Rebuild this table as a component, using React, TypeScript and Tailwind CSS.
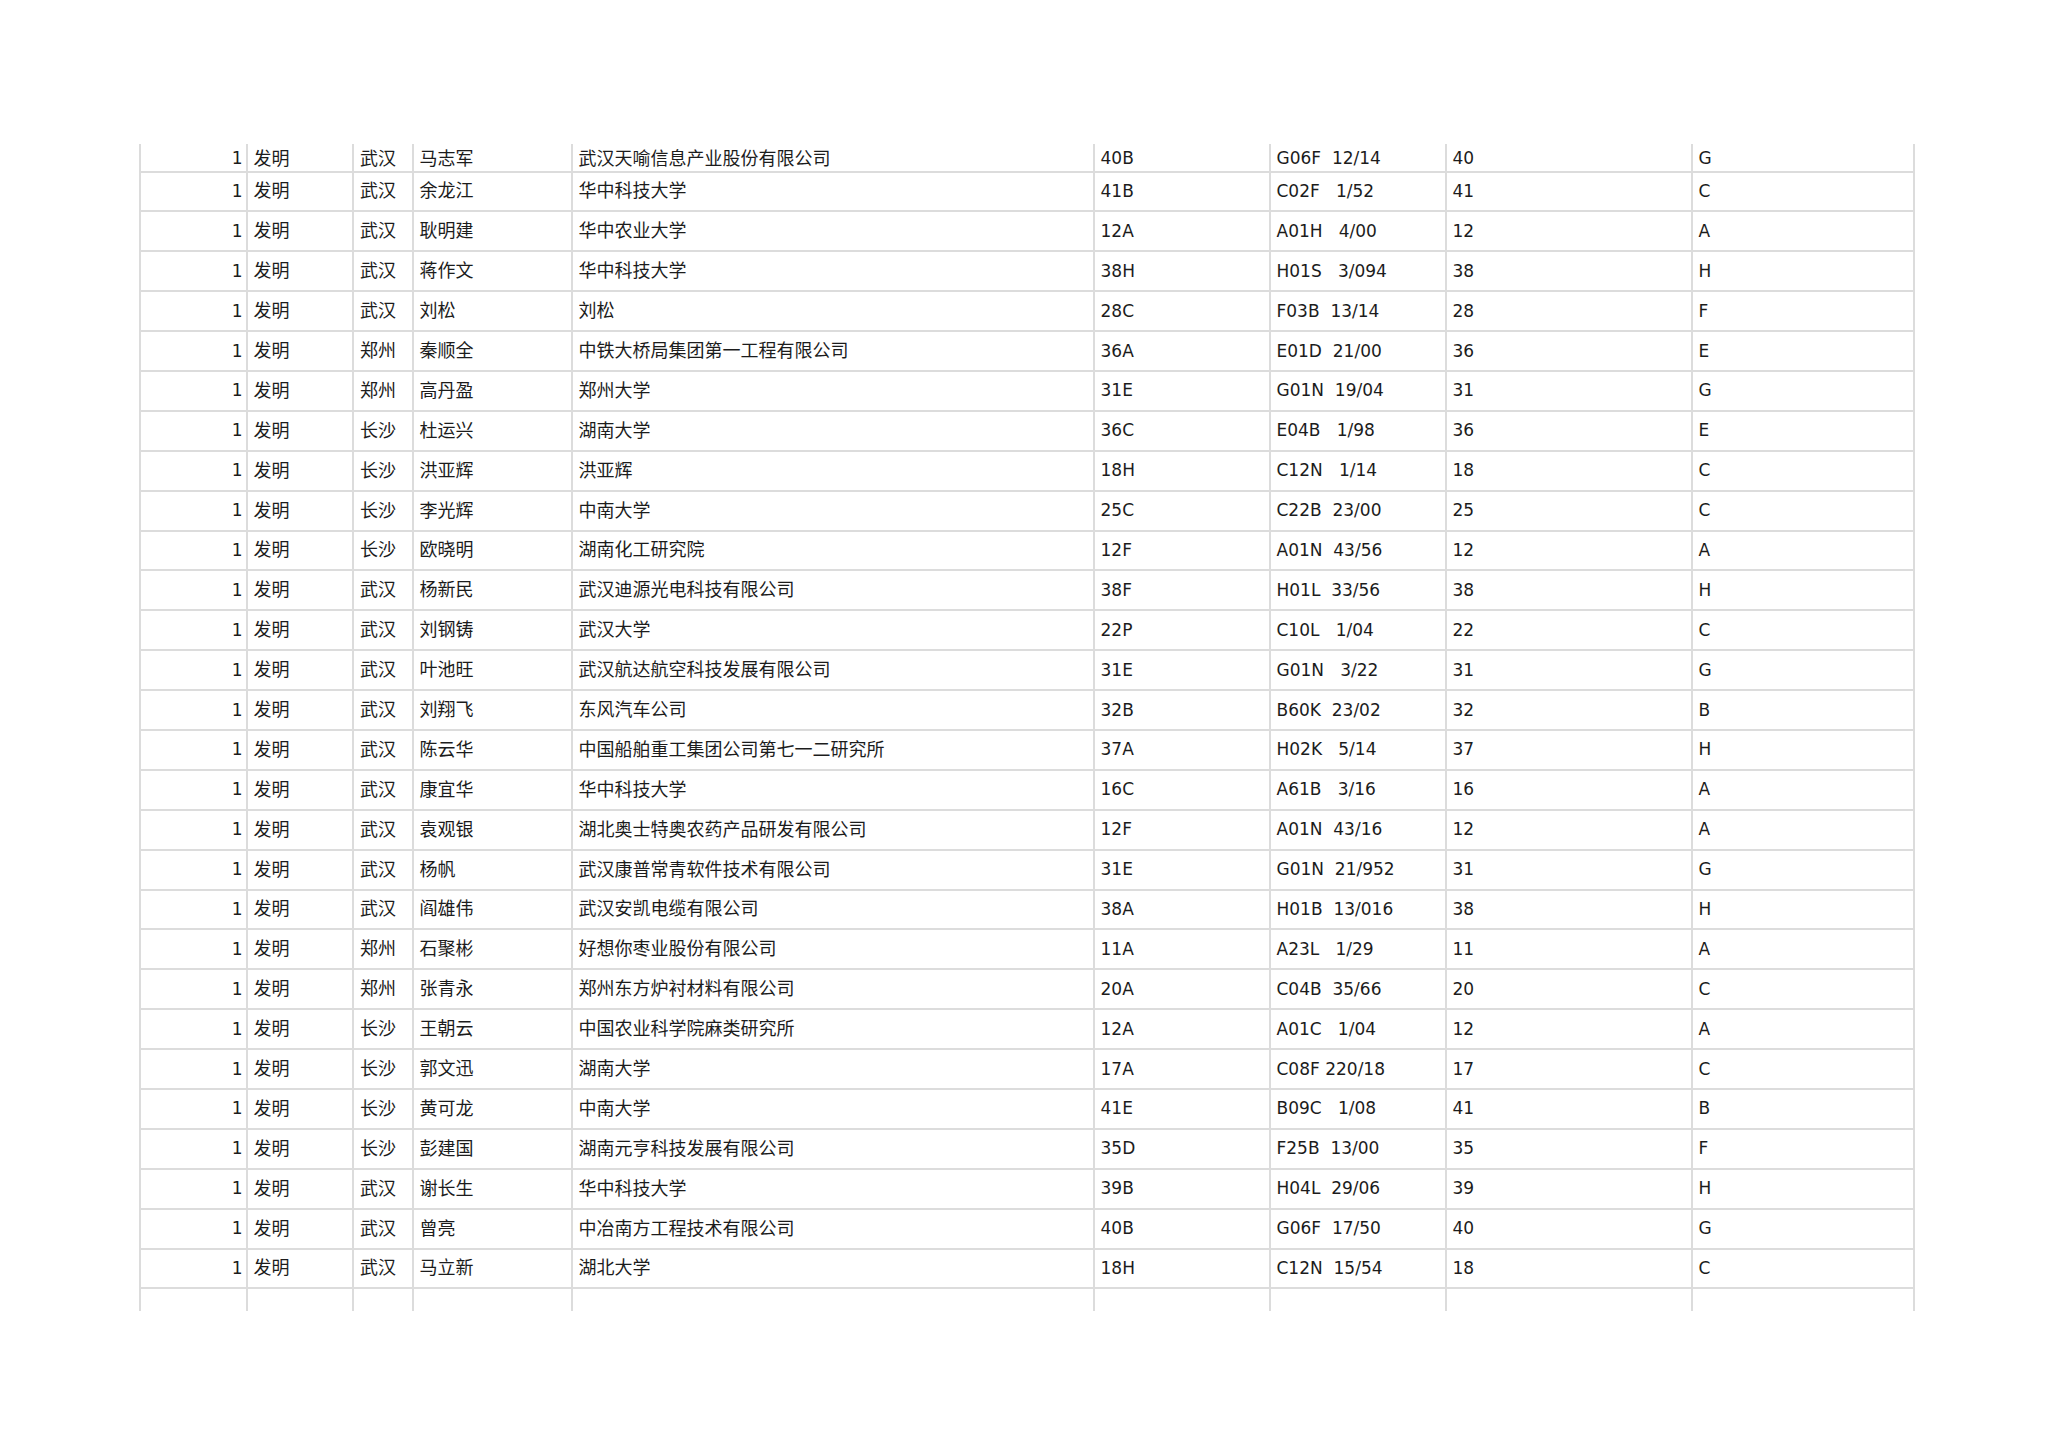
import React from "react";

type Row = [string, string, string, string, string, string, string, string];

// 地区, 发明人, 单位, 分类, IPC 小类, IPC 主组/分组, 大类号, 部
const rows: Row[] = [
  ["武汉", "马志军", "武汉天喻信息产业股份有限公司", "40B", "G06F", "12/14", "40", "G"],
  ["武汉", "余龙江", "华中科技大学", "41B", "C02F", "1/52", "41", "C"],
  ["武汉", "耿明建", "华中农业大学", "12A", "A01H", "4/00", "12", "A"],
  ["武汉", "蒋作文", "华中科技大学", "38H", "H01S", "3/094", "38", "H"],
  ["武汉", "刘松", "刘松", "28C", "F03B", "13/14", "28", "F"],
  ["郑州", "秦顺全", "中铁大桥局集团第一工程有限公司", "36A", "E01D", "21/00", "36", "E"],
  ["郑州", "高丹盈", "郑州大学", "31E", "G01N", "19/04", "31", "G"],
  ["长沙", "杜运兴", "湖南大学", "36C", "E04B", "1/98", "36", "E"],
  ["长沙", "洪亚辉", "洪亚辉", "18H", "C12N", "1/14", "18", "C"],
  ["长沙", "李光辉", "中南大学", "25C", "C22B", "23/00", "25", "C"],
  ["长沙", "欧晓明", "湖南化工研究院", "12F", "A01N", "43/56", "12", "A"],
  ["武汉", "杨新民", "武汉迪源光电科技有限公司", "38F", "H01L", "33/56", "38", "H"],
  ["武汉", "刘钢铸", "武汉大学", "22P", "C10L", "1/04", "22", "C"],
  ["武汉", "叶池旺", "武汉航达航空科技发展有限公司", "31E", "G01N", "3/22", "31", "G"],
  ["武汉", "刘翔飞", "东风汽车公司", "32B", "B60K", "23/02", "32", "B"],
  ["武汉", "陈云华", "中国船舶重工集团公司第七一二研究所", "37A", "H02K", "5/14", "37", "H"],
  ["武汉", "康宜华", "华中科技大学", "16C", "A61B", "3/16", "16", "A"],
  ["武汉", "袁观银", "湖北奥士特奥农药产品研发有限公司", "12F", "A01N", "43/16", "12", "A"],
  ["武汉", "杨帆", "武汉康普常青软件技术有限公司", "31E", "G01N", "21/952", "31", "G"],
  ["武汉", "阎雄伟", "武汉安凯电缆有限公司", "38A", "H01B", "13/016", "38", "H"],
  ["郑州", "石聚彬", "好想你枣业股份有限公司", "11A", "A23L", "1/29", "11", "A"],
  ["郑州", "张青永", "郑州东方炉衬材料有限公司", "20A", "C04B", "35/66", "20", "C"],
  ["长沙", "王朝云", "中国农业科学院麻类研究所", "12A", "A01C", "1/04", "12", "A"],
  ["长沙", "郭文迅", "湖南大学", "17A", "C08F", "220/18", "17", "C"],
  ["长沙", "黄可龙", "中南大学", "41E", "B09C", "1/08", "41", "B"],
  ["长沙", "彭建国", "湖南元亨科技发展有限公司", "35D", "F25B", "13/00", "35", "F"],
  ["武汉", "谢长生", "华中科技大学", "39B", "H04L", "29/06", "39", "H"],
  ["武汉", "曾亮", "中冶南方工程技术有限公司", "40B", "G06F", "17/50", "40", "G"],
  ["武汉", "马立新", "湖北大学", "18H", "C12N", "15/54", "18", "C"],
];

// main group is right-padded the way the source sheet does it
function ipc(cls: string, group: string) {
  const digits = group.split("/")[0].length;
  const gap = digits >= 3 ? " " : digits === 2 ? "  " : "   ";
  return cls + gap + group;
}

const cjk = "[font-family:'DejaVu_Sans','Noto_Sans_CJK_SC',sans-serif] text-[18px]";
const lat = "[font-family:'DejaVu_Sans','Noto_Sans_CJK_SC',sans-serif] text-[17px]";
const cell = "flex min-w-0 items-center overflow-hidden whitespace-pre border-l-2 border-[#dcdcdc] leading-none text-[#1c1c1c]";

function TableRow({ r, first }: { r: Row; first: boolean }) {
  const h = first ? "h-[28.5px] pt-[3px] border-b-2 border-b-[#dcdcdc]" : "h-[39.9px] border-b-2 border-b-[#dcdcdc]";
  return (
    <>
      <div className={`${cell} ${h} ${lat} justify-end pr-[3px]`}>1</div>
      <div className={`${cell} ${h} ${cjk} pl-[6px]`}>发明</div>
      <div className={`${cell} ${h} ${cjk} pl-[6px]`}>{r[0]}</div>
      <div className={`${cell} ${h} ${cjk} pl-[6px]`}>{r[1]}</div>
      <div className={`${cell} ${h} ${cjk} pl-[6px]`}>{r[2]}</div>
      <div className={`${cell} ${h} ${lat} pl-[6px]`}>{r[3]}</div>
      <div className={`${cell} ${h} ${lat} pl-[6px]`}>{ipc(r[4], r[5])}</div>
      <div className={`${cell} ${h} ${lat} pl-[6px]`}>{r[6]}</div>
      <div className={`${cell} ${h} ${lat} pl-[6px] border-r-2 border-r-[#dcdcdc]`}>{r[7]}</div>
    </>
  );
}

export default function App() {
  const empty = "h-[22px] border-l-2 border-[#dcdcdc]";
  return (
    <div className="min-h-[1447px] w-[2048px] bg-white pt-[144px]">
      <div className="ml-[139px] grid w-[1776px] grid-cols-[106.5px_106.5px_59.5px_159px_522px_176px_176px_246px_224px]">
        {rows.map((r, i) => (
          <TableRow key={i} r={r} first={i === 0} />
        ))}
        <div className={empty} />
        <div className={empty} />
        <div className={empty} />
        <div className={empty} />
        <div className={empty} />
        <div className={empty} />
        <div className={empty} />
        <div className={empty} />
        <div className={`${empty} border-r-2 border-r-[#dcdcdc]`} />
      </div>
    </div>
  );
}
